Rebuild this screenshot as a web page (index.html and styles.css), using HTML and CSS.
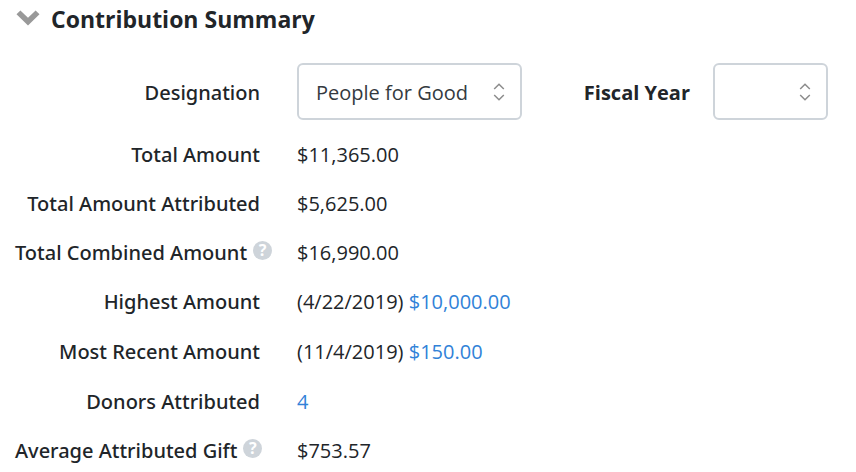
FILE: index.html
```html
<!DOCTYPE html>
<html lang="en">
<head>
<meta charset="utf-8">
<title>Contribution Summary</title>
<link rel="stylesheet" href="styles.css">
</head>
<body>
<main class="summary">
  <header class="summary-header">
    <svg class="chevron" viewBox="0 0 24 16" aria-hidden="true"><path d="M0.5 4.2 4.4 0.4 12 7.8 19.6 0.4 23.5 4.2 12 15.6z"/></svg>
    <h1 class="title">Contribution Summary</h1>
  </header>

  <form class="filters">
    <label class="label" for="designation">Designation</label>
    <div class="select-box">
      <select class="select" id="designation"><option>People for Good</option></select>
      <svg class="arrows" viewBox="0 0 12 18" aria-hidden="true"><path d="M1.2 6 6 1.2 10.8 6M1.2 12 6 16.8 10.8 12"/></svg>
    </div>
    <label class="label label-strong" for="fiscal-year">Fiscal Year</label>
    <div class="select-box">
      <select class="select" id="fiscal-year"><option></option></select>
      <svg class="arrows" viewBox="0 0 12 18" aria-hidden="true"><path d="M1.2 6 6 1.2 10.8 6M1.2 12 6 16.8 10.8 12"/></svg>
    </div>
  </form>

  <dl class="details">
    <div class="row"><dt class="label">Total Amount</dt><dd class="value">$11,365.00</dd></div>
    <div class="row"><dt class="label">Total Amount Attributed</dt><dd class="value">$5,625.00</dd></div>
    <div class="row"><dt class="label has-help">Total Combined Amount<span class="help">?</span></dt><dd class="value">$16,990.00</dd></div>
    <div class="row row-link"><dt class="label">Highest Amount</dt><dd class="value">(4/22/2019) <a class="link" href="#">$10,000.00</a></dd></div>
    <div class="row row-link"><dt class="label">Most Recent Amount</dt><dd class="value">(11/4/2019) <a class="link" href="#">$150.00</a></dd></div>
    <div class="row"><dt class="label">Donors Attributed</dt><dd class="value"><a class="link" href="#">4</a></dd></div>
    <div class="row"><dt class="label has-help">Average Attributed Gift<span class="help">?</span></dt><dd class="value">$753.57</dd></div>
  </dl>
</main>
</body>
</html>
```
FILE: styles.css
```css
* {
  box-sizing: border-box;
}

body {
  margin: 0;
  background: #fff;
  color: #212529;
  font-family: "Segoe UI", "Open Sans", "Noto Sans", sans-serif;
  font-size: 20px;
  line-height: 30px;
}

.summary {
  padding-top: 3px;
}

.summary-header {
  display: flex;
  align-items: center;
  gap: 11px;
  padding-left: 16px;
}

.chevron {
  width: 24px;
  height: 16px;
  margin-bottom: 2px;
  fill: #999;
}

.title {
  margin: 0;
  font-size: 23px;
  font-weight: 700;
  line-height: 32px;
}

.filters {
  display: grid;
  grid-template-columns: 297px minmax(0, 225fr) minmax(0, 191fr) minmax(0, 115fr);
  align-items: center;
  margin-top: 28px;
  padding-right: 28px;
}

.label {
  padding-right: 37px;
  font-family: "Noto Sans", "Open Sans", sans-serif;
  font-weight: 500;
  text-align: right;
  white-space: nowrap;
}

.label-strong {
  padding-right: 23px;
  font-family: "Open Sans", "Noto Sans", sans-serif;
  font-weight: 700;
}

.filters .label {
  padding-top: 2px;
}

.select-box {
  display: grid;
  align-items: center;
}

.select-box > * {
  grid-area: 1 / 1;
}

.select {
  width: 100%;
  height: 57px;
  padding: 3px 40px 0 17px;
  appearance: none;
  border: 2px solid #ced4da;
  border-radius: 6px;
  background: #fff;
  color: #343a40;
  font: inherit;
}

.arrows {
  justify-self: end;
  width: 12px;
  height: 18px;
  margin-right: 17px;
  fill: none;
  stroke: #8c8c8c;
  stroke-width: 1.5;
  pointer-events: none;
}

.details {
  margin: 10px 0 0;
}

.row {
  display: grid;
  grid-template-columns: 297px 1fr;
  align-items: center;
  min-height: 49px;
}

.row-link {
  min-height: 50px;
}

.has-help {
  display: flex;
  align-items: center;
  gap: 6px;
  padding: 0 0 0 15px;
}

.help {
  flex: none;
  width: 19px;
  height: 19px;
  margin-bottom: 4px;
  border-radius: 50%;
  background: #ced4da;
  color: #fff;
  font-size: 16px;
  font-weight: 700;
  line-height: 19px;
  text-align: center;
}

.value {
  margin: 0;
}

.link {
  color: #3182d8;
  text-decoration: none;
}
```
